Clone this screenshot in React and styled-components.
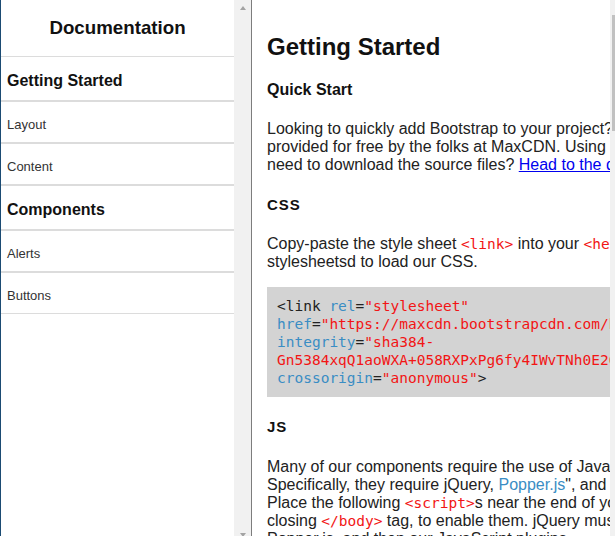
import React from 'react'
import styled, { createGlobalStyle } from 'styled-components'

const navItems = [
  { label: 'Getting Started', section: true },
  { label: 'Layout' },
  { label: 'Content' },
  { label: 'Components', section: true },
  { label: 'Alerts' },
  { label: 'Buttons' },
]

const App = () => {
  return (
    <>
      <GlobalStyle />
      <Page>
        <Sidebar>
          <SideContent>
            <SideTitle>Documentation</SideTitle>
            <NavList>
              {navItems.map((item) => (
                <NavItem key={item.label} $section={item.section}>
                  {item.label}
                </NavItem>
              ))}
            </NavList>
          </SideContent>
          <ScrollTrack>
            <ScrollButton><Arrow /></ScrollButton>
            <ScrollButton><Arrow $down /></ScrollButton>
          </ScrollTrack>
        </Sidebar>

        <Main>
          <MainScroll>
            <Article>
              <Title>Getting Started</Title>
              <SubTitle>Quick Start</SubTitle>
              <Paragraph>
                Looking to quickly add Bootstrap to your project? Use BootstrapCDN,<br />
                provided for free by the folks at MaxCDN. Using a package manager or<br />
                need to download the source files? <DocLink href="#">Head to the downloads page.</DocLink>
              </Paragraph>

              <SectionTitle $top={22}>CSS</SectionTitle>
              <Paragraph $top={22}>
                Copy-paste the style sheet <InlineCode>&lt;link&gt;</InlineCode> into your <InlineCode>&lt;head&gt;</InlineCode> before all other<br />
                stylesheetsd to load our CSS.
              </Paragraph>
              <CodeBlock>
                <Tag>&lt;link </Tag><Attr>rel</Attr>=<Value>"stylesheet"</Value>{'\n'}
                <Attr>href</Attr>=<Value>"https://maxcdn.bootstrapcdn.com/bootstrap/4.0.0/css/bootstrap.min.css"</Value>{'\n'}
                <Attr>integrity</Attr>=<Value>"sha384-</Value>{'\n'}
                <Value>Gn5384xqQ1aoWXA+058RXPxPg6fy4IWvTNh0E263XmFcJlSAwiGgFAW/dAiS6JXm"</Value>{'\n'}
                <Attr>crossorigin</Attr>=<Value>"anonymous"</Value><Tag>&gt;</Tag>
              </CodeBlock>

              <SectionTitle $top={21}>JS</SectionTitle>
              <Paragraph $top={23}>
                Many of our components require the use of JavaScript to function.<br />
                Specifically, they require jQuery, <SoftLink href="#">Popper.js</SoftLink>", and our own JavaScript plugins.<br />
                Place the following <InlineCode>&lt;script&gt;</InlineCode>s near the end of your pages, right before the<br />
                closing <InlineCode>&lt;/body&gt;</InlineCode> tag, to enable them. jQuery must come first, then<br />
                Popper.js, and then our JavaScript plugins.
              </Paragraph>
            </Article>
          </MainScroll>
          <ScrollTrack>
            <ScrollButton />
            <Thumb />
            <TrackSpacer />
            <ScrollButton />
          </ScrollTrack>
        </Main>
      </Page>
    </>
  )
}

const GlobalStyle = createGlobalStyle`
  html, body {
    margin: 0;
    padding: 0;
    overflow: hidden;
    background: #fff;
  }
  body {
    font-family: "Liberation Sans", Arial, sans-serif;
  }
`

const Page = styled.div`
  display: flex;
  width: 627px;
  height: 542px;
  overflow: hidden;
`

const Sidebar = styled.aside`
  display: flex;
  flex: none;
  height: 100%;
  border-left: 1px solid #1b4b73;
  border-right: 1px solid #7d7d7d;
`

const SideContent = styled.nav`
  width: 233px;
`

const SideTitle = styled.h3`
  margin: 0;
  padding: 17px 0;
  font-size: 18.72px;
  line-height: 22px;
  font-weight: bold;
  text-align: center;
  color: #111;
`

const NavList = styled.ul`
  list-style: none;
  margin: 0;
  padding: 0;
`

const NavItem = styled.li`
  border-top: 1px solid #dcdcdc;
  border-bottom: 1px solid #dcdcdc;
  padding: ${(p) => (p.$section ? '15px 6px 10px' : '15px 6px 10px')};
  font-size: ${(p) => (p.$section ? '16px' : '13px')};
  line-height: ${(p) => (p.$section ? '18px' : '15px')};
  font-weight: ${(p) => (p.$section ? 'bold' : 'normal')};
  color: ${(p) => (p.$section ? '#111' : '#333')};
`

const ScrollTrack = styled.div`
  flex: none;
  width: 17px;
  height: 100%;
  background: #f1f1f1;
  display: flex;
  flex-direction: column;
  justify-content: space-between;
`

const ScrollButton = styled.div`
  height: 15px;
  display: flex;
  align-items: center;
  justify-content: center;
`

const Arrow = styled.span`
  width: 0;
  height: 0;
  border-left: 3.5px solid transparent;
  border-right: 3.5px solid transparent;
  ${(p) => (p.$down ? 'border-top' : 'border-bottom')}: 4px solid #a3a3a3;
`

const Thumb = styled.div`
  height: 116px;
  margin: 0 2px;
  background: #c1c1c1;
`

const TrackSpacer = styled.div`
  flex: 1;
`

const Main = styled.main`
  display: flex;
  flex: 1;
  min-width: 0;
  height: 100%;
`

const MainScroll = styled.div`
  flex: 1;
  min-width: 0;
  overflow: hidden;
  padding-left: 15px;
`

const Article = styled.article`
  width: 580px;
  padding-top: 33px;
  color: #222;
  font-size: 16px;
`

const Title = styled.h1`
  margin: 0;
  font-size: 24px;
  font-weight: bold;
  color: #111;
`

const SubTitle = styled.h4`
  margin: 20px 0 0;
  font-size: 16px;
  font-weight: bold;
  color: #111;
`

const SectionTitle = styled.h4`
  margin: ${(p) => p.$top || 21}px 0 0;
  font-size: 15px;
  font-weight: bold;
  letter-spacing: 1px;
  color: #111;
`

const Paragraph = styled.p`
  margin: ${(p) => p.$top || 21}px 0 0;
  white-space: nowrap;
`

const DocLink = styled.a`
  color: #0000ee;
  text-decoration: underline;
`

const SoftLink = styled.a`
  color: #3a8dc4;
  text-decoration: none;
`

const InlineCode = styled.code`
  font-family: "DejaVu Sans Mono", "Liberation Mono", monospace;
  font-size: 14.5px;
  color: #f21515;
`

const CodeBlock = styled.pre`
  margin: 16px 0 0;
  padding: 10px;
  background: #d3d3d3;
  font-family: "DejaVu Sans Mono", "Liberation Mono", monospace;
  font-size: 14.5px;
  line-height: 18px;
  color: #222;
  white-space: pre;
  overflow: hidden;
`

const Tag = styled.span`
  color: #222;
`

const Attr = styled.span`
  color: #3a8dc4;
`

const Value = styled.span`
  color: #f21515;
`

export default App
